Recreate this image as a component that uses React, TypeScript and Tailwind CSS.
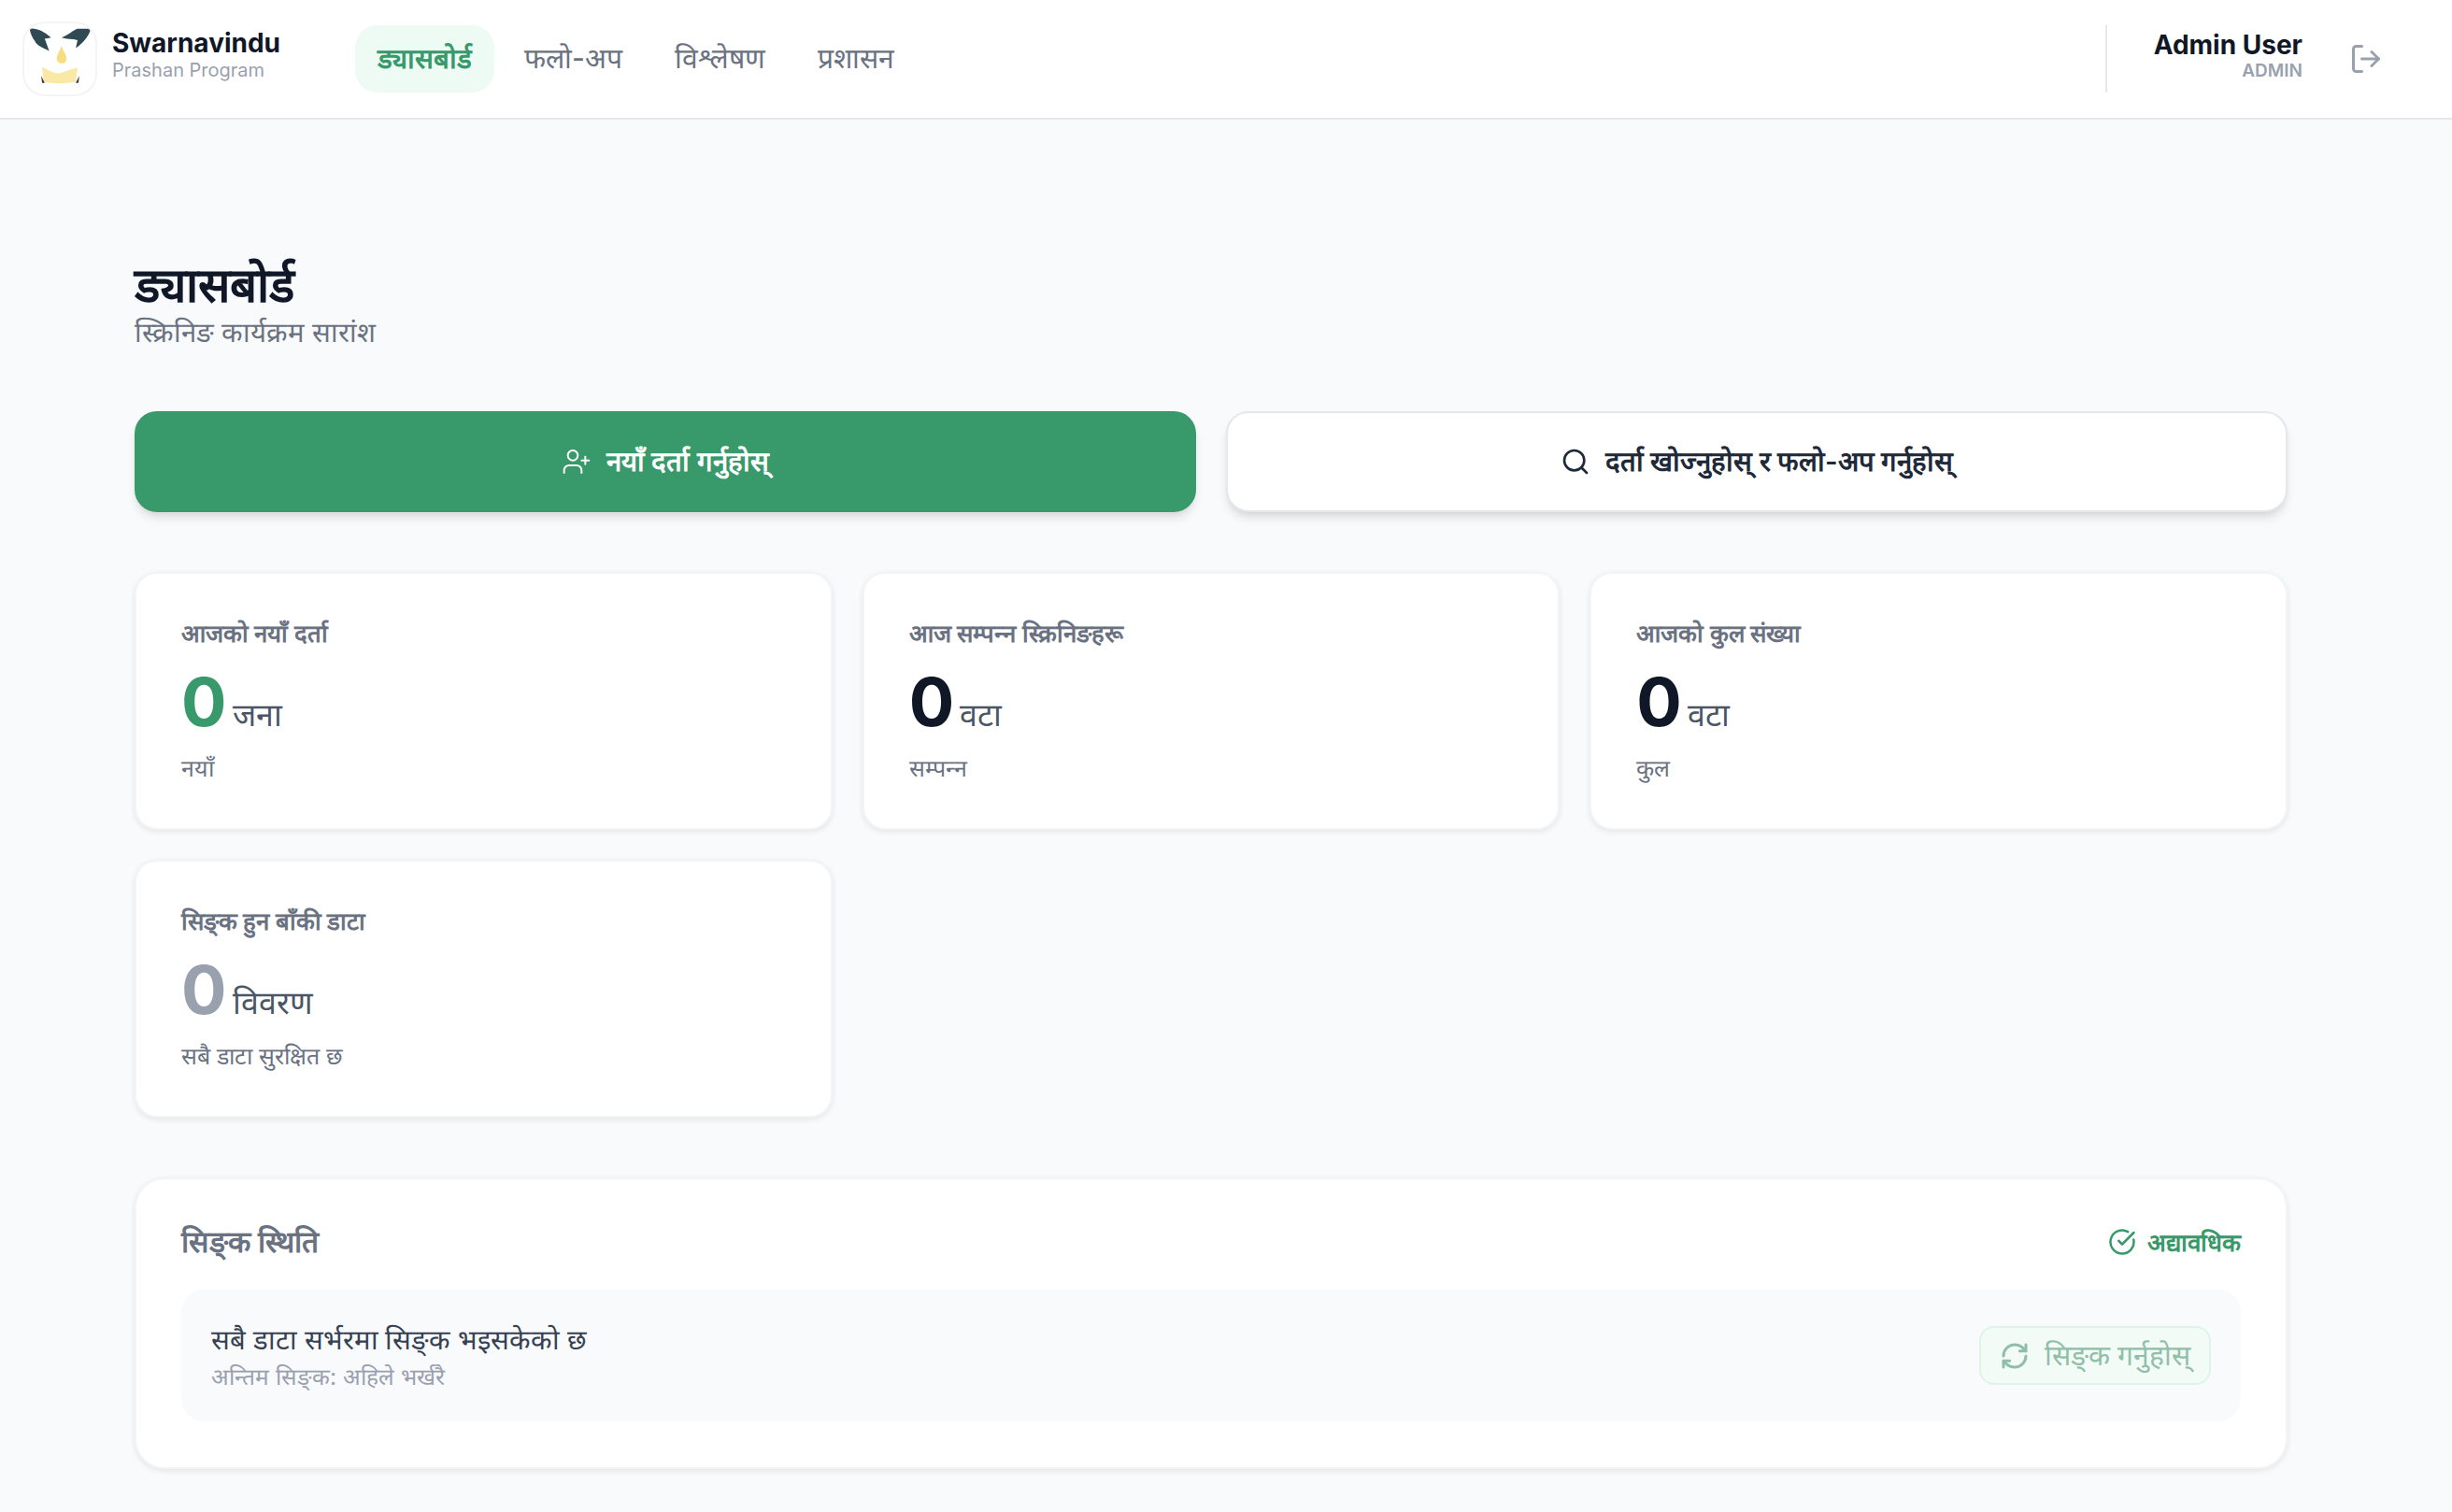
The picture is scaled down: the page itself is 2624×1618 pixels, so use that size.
import { CircleCheckBig, LogOut, RefreshCw, Search, UserPlus } from 'lucide-react';

const navItems = ['ड्यासबोर्ड', 'फलो-अप', 'विश्लेषण', 'प्रशासन'];

const stats = [
  { label: 'आजको नयाँ दर्ता', unit: 'जना', note: 'नयाँ', color: 'text-[#38996b]' },
  { label: 'आज सम्पन्न स्क्रिनिङहरू', unit: 'वटा', note: 'सम्पन्न', color: 'text-gray-900' },
  { label: 'आजको कुल संख्या', unit: 'वटा', note: 'कुल', color: 'text-gray-900' },
  { label: 'सिङ्क हुन बाँकी डाटा', unit: 'विवरण', note: 'सबै डाटा सुरक्षित छ', color: 'text-gray-400' }
];

function Logo() {
  return (
    <div className="w-20 h-20 shrink-0 rounded-3xl border-2 border-gray-100 bg-white overflow-hidden">
      <svg viewBox="0 0 80 80" className="w-full h-full blur-[0.6px]">
        <path d="M6 6 C14 5 22 9 30 16 C27 17 25 17 23 17 L28 31 C20 27 14 25 12 20 C9 16 7 12 6 6Z" fill="#2f4a52" />
        <path d="M75 6 L60 6 C54 8 50 13 42 16 C48 18 54 17 60 19 L58 28 C66 22 72 16 75 6Z" fill="#2f4a52" />
        <path d="M42 25 C44 32 49 37 47 42 C46 46 39 46 37 42 C35 37 40 32 42 25Z" fill="#f6dd82" />
        <path d="M20 49 C28 53 34 57 40 56 C46 55 52 51 60 50 L58 66 C48 68 30 68 22 66Z" fill="#f9e8a6" />
        <path d="M19 59 L23 67 L20 67Z" fill="#3a3a3a" />
        <path d="M62 59 L58 67 L61 67Z" fill="#3a3a3a" />
      </svg>
    </div>
  );
}

function Header() {
  return (
    <header className="h-32 bg-white border-b-2 border-gray-200 flex items-center pl-6 pr-[74px]">
      <Logo />
      <div className="ml-4 mb-[10px] w-[260px]">
        <p className="text-[28px] leading-[34px] font-bold text-gray-900">Swarnavindu</p>
        <p className="text-[20px] leading-[24px] text-gray-400">Prashan Program</p>
      </div>
      <nav className="flex items-center gap-2">
        {navItems.map((item, i) => (
          <a
            key={item}
            className={
              i === 0
                ? 'h-[72px] px-6 pb-[2px] flex items-center rounded-3xl bg-[#eefbf4] text-[29.5px] font-semibold text-[#38996b]'
                : 'h-[72px] px-6 pb-[2px] flex items-center rounded-3xl text-[30px] font-medium text-gray-500'
            }
          >
            {item}
          </a>
        ))}
      </nav>
      <div className="ml-auto flex items-center h-[72px] border-l-2 border-gray-200 pl-[50px]">
        <div className="text-right mb-[8px]">
          <p className="text-[28px] leading-[34px] font-bold text-gray-900">Admin User</p>
          <p className="text-[19px] leading-[22px] font-semibold text-gray-400">ADMIN</p>
        </div>
        <LogOut className="ml-[50px] text-gray-400" size={36} strokeWidth={2} />
      </div>
    </header>
  );
}

function StatCard({ label, unit, note, color }: (typeof stats)[number]) {
  return (
    <div className="h-[276px] bg-white rounded-3xl border-2 border-gray-100 shadow-[0_2px_6px_rgba(0,0,0,0.09)] px-12 pt-[46px]">
      <p className="text-[25.8px] leading-[36px] font-semibold text-gray-500 [font-feature-settings:'akhn'_0,'cjct'_0,'pres'_0]">{label}</p>
      <div className="mt-[15px] flex items-baseline gap-1.5">
        <span className={`text-[72px] leading-[80px] font-bold ${color}`}>0</span>
        <span className="text-[34px] leading-[48px] text-gray-600">{unit}</span>
      </div>
      <p className="mt-[13px] text-[25px] leading-[36px] text-gray-500 [font-feature-settings:'pres'_0]">{note}</p>
    </div>
  );
}

export default function App() {
  return (
    <div className="min-h-screen bg-[#f9fafb] font-['Inter',sans-serif]">
      <Header />
      <main className="w-[2304px] ml-36 pt-[147px] pb-11">
        <h1 className="text-[51px] leading-[60px] font-bold text-gray-900">ड्यासबोर्ड</h1>
        <p className="mt-[3px] text-[29.3px] leading-[36px] text-gray-500">स्क्रिनिङ कार्यक्रम सारांश</p>

        <div className="mt-[66px] grid grid-cols-2 gap-8">
          <button className="h-[108px] rounded-3xl bg-[#38996b] text-white text-[29.3px] font-semibold flex items-center justify-center gap-4 shadow-[0_8px_12px_-2px_rgba(0,0,0,0.1),0_4px_8px_-4px_rgba(0,0,0,0.1)]">
            <UserPlus size={32} strokeWidth={1.5} />
            नयाँ दर्ता गर्नुहोस्
          </button>
          <button className="h-[108px] rounded-3xl bg-white border-2 border-gray-200 text-gray-800 text-[29.3px] font-semibold flex items-center justify-center gap-4 shadow-[0_8px_12px_-2px_rgba(0,0,0,0.1),0_4px_8px_-4px_rgba(0,0,0,0.1)]">
            <Search size={32} strokeWidth={2} />
            दर्ता खोज्नुहोस् र फलो-अप गर्नुहोस्
          </button>
        </div>

        <div className="mt-16 grid grid-cols-3 gap-x-8 gap-y-8">
          {stats.map((s) => (
            <StatCard key={s.label} {...s} />
          ))}
        </div>

        <section className="mt-16 h-[312px] bg-white rounded-[32px] border-2 border-gray-100 shadow-[0_2px_6px_rgba(0,0,0,0.09)] px-12 pt-[45px]">
          <div className="flex items-center justify-between">
            <h2 className="text-[31.8px] leading-[44px] font-bold text-gray-500 [font-feature-settings:'akhn'_0,'cjct'_0,'pres'_0]">सिङ्क स्थिति</h2>
            <span className="flex items-center gap-3 text-[26px] font-semibold text-[#38996b]">
              <CircleCheckBig size={30} strokeWidth={2} />
              अद्यावधिक
            </span>
          </div>
          <div className="mt-[29px] h-[141px] rounded-3xl bg-[#f9fafb] px-8 flex items-center justify-between">
            <div className="pt-[3px]">
              <p className="text-[29.3px] leading-[38px] font-medium text-gray-700 [font-feature-settings:'akhn'_0,'cjct'_0,'pres'_0]">सबै डाटा सर्भरमा सिङ्क भइसकेको छ</p>
              <p className="mt-[3px] text-[24.5px] leading-[34px] text-gray-400 [font-feature-settings:'akhn'_0,'cjct'_0,'pres'_0]">अन्तिम सिङ्क: अहिले भर्खरै</p>
            </div>
            <button className="h-[63px] px-5 rounded-2xl border-2 border-[#dcf5e8] bg-[#f3fbf7] text-[#8fbfa8] text-[30px] font-medium flex items-center gap-4 [font-feature-settings:'akhn'_0,'cjct'_0,'pres'_0]">
              <RefreshCw size={32} strokeWidth={2.25} />
              सिङ्क गर्नुहोस्
            </button>
          </div>
        </section>
      </main>
    </div>
  );
}
